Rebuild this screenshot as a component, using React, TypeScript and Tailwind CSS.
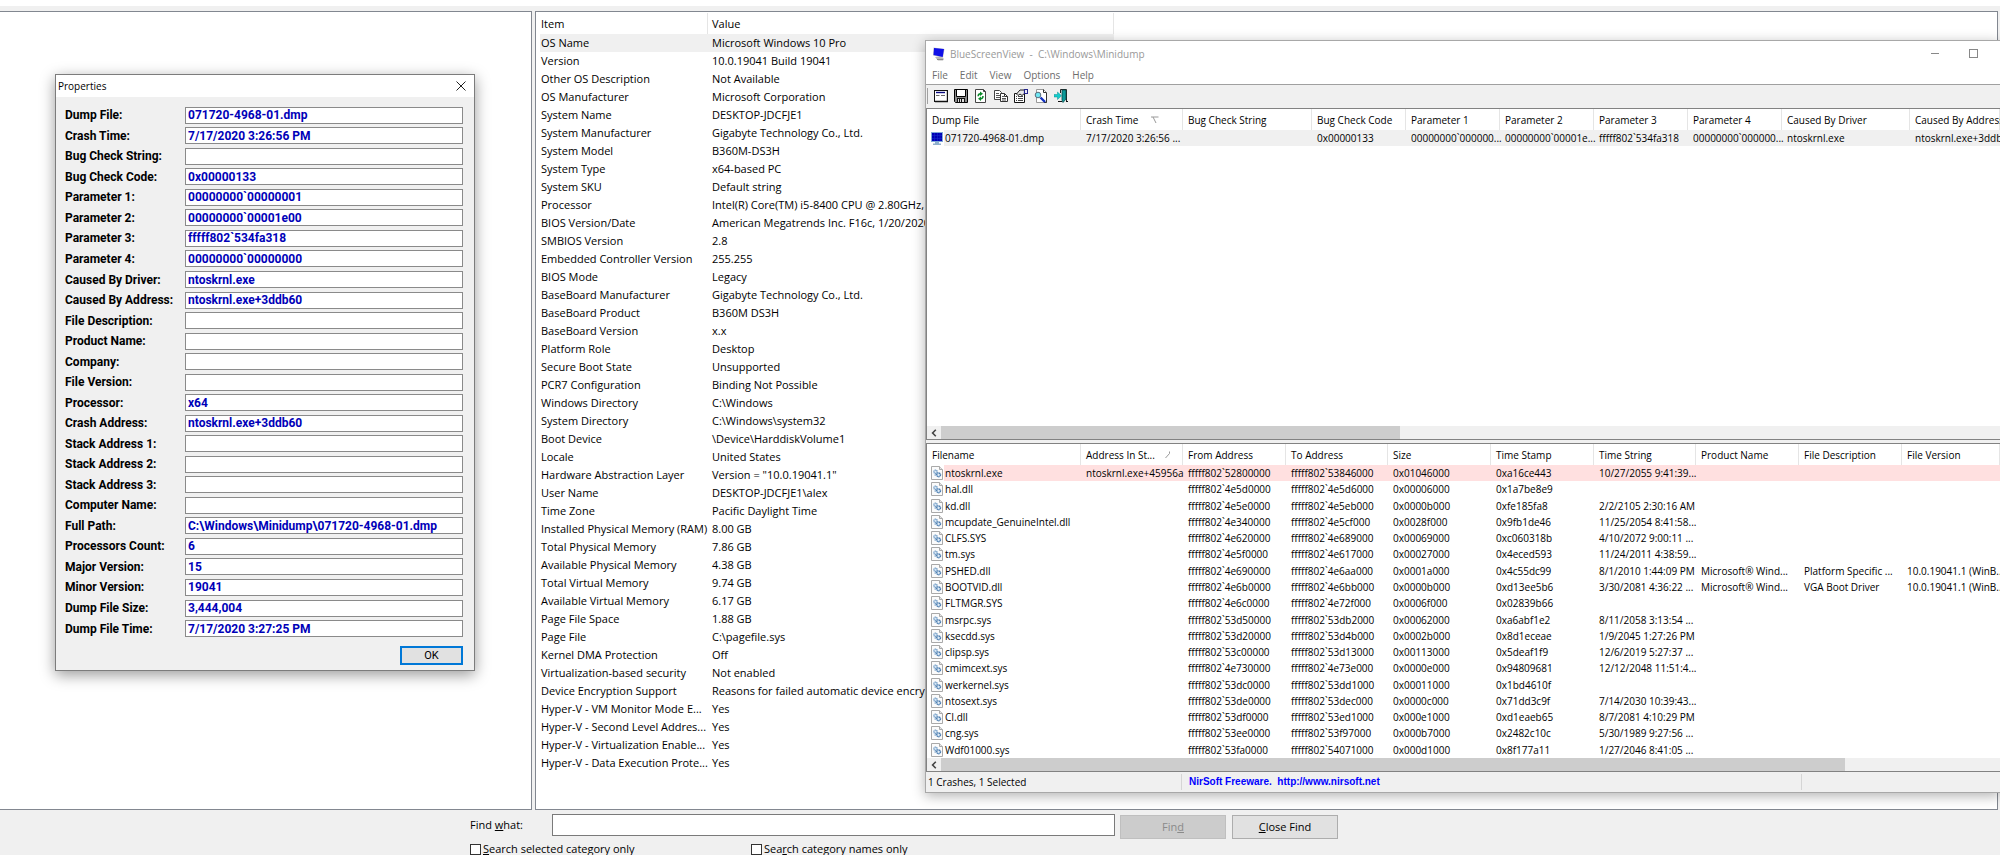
import { ReactNode } from 'react';

const systemInfo = [
    ['OS Name', 'Microsoft Windows 10 Pro'],
    ['Version', '10.0.19041 Build 19041'],
    ['Other OS Description', 'Not Available'],
    ['OS Manufacturer', 'Microsoft Corporation'],
    ['System Name', 'DESKTOP-JDCFJE1'],
    ['System Manufacturer', 'Gigabyte Technology Co., Ltd.'],
    ['System Model', 'B360M-DS3H'],
    ['System Type', 'x64-based PC'],
    ['System SKU', 'Default string'],
    ['Processor', 'Intel(R) Core(TM) i5-8400 CPU @ 2.80GHz,'],
    ['BIOS Version/Date', 'American Megatrends Inc. F16c, 1/20/2020'],
    ['SMBIOS Version', '2.8'],
    ['Embedded Controller Version', '255.255'],
    ['BIOS Mode', 'Legacy'],
    ['BaseBoard Manufacturer', 'Gigabyte Technology Co., Ltd.'],
    ['BaseBoard Product', 'B360M DS3H'],
    ['BaseBoard Version', 'x.x'],
    ['Platform Role', 'Desktop'],
    ['Secure Boot State', 'Unsupported'],
    ['PCR7 Configuration', 'Binding Not Possible'],
    ['Windows Directory', 'C:\\Windows'],
    ['System Directory', 'C:\\Windows\\system32'],
    ['Boot Device', '\\Device\\HarddiskVolume1'],
    ['Locale', 'United States'],
    ['Hardware Abstraction Layer', 'Version = "10.0.19041.1"'],
    ['User Name', 'DESKTOP-JDCFJE1\\alex'],
    ['Time Zone', 'Pacific Daylight Time'],
    ['Installed Physical Memory (RAM)', '8.00 GB'],
    ['Total Physical Memory', '7.86 GB'],
    ['Available Physical Memory', '4.38 GB'],
    ['Total Virtual Memory', '9.74 GB'],
    ['Available Virtual Memory', '6.17 GB'],
    ['Page File Space', '1.88 GB'],
    ['Page File', 'C:\\pagefile.sys'],
    ['Kernel DMA Protection', 'Off'],
    ['Virtualization-based security', 'Not enabled'],
    ['Device Encryption Support', 'Reasons for failed automatic device encryp'],
    ['Hyper-V - VM Monitor Mode E...', 'Yes'],
    ['Hyper-V - Second Level Addres...', 'Yes'],
    ['Hyper-V - Virtualization Enable...', 'Yes'],
    ['Hyper-V - Data Execution Prote...', 'Yes'],
];

const properties = [
    ['Dump File:', '071720-4968-01.dmp'],
    ['Crash Time:', '7/17/2020 3:26:56 PM'],
    ['Bug Check String:', ''],
    ['Bug Check Code:', '0x00000133'],
    ['Parameter 1:', '00000000`00000001'],
    ['Parameter 2:', '00000000`00001e00'],
    ['Parameter 3:', 'fffff802`534fa318'],
    ['Parameter 4:', '00000000`00000000'],
    ['Caused By Driver:', 'ntoskrnl.exe'],
    ['Caused By Address:', 'ntoskrnl.exe+3ddb60'],
    ['File Description:', ''],
    ['Product Name:', ''],
    ['Company:', ''],
    ['File Version:', ''],
    ['Processor:', 'x64'],
    ['Crash Address:', 'ntoskrnl.exe+3ddb60'],
    ['Stack Address 1:', ''],
    ['Stack Address 2:', ''],
    ['Stack Address 3:', ''],
    ['Computer Name:', ''],
    ['Full Path:', 'C:\\Windows\\Minidump\\071720-4968-01.dmp'],
    ['Processors Count:', '6'],
    ['Major Version:', '15'],
    ['Minor Version:', '19041'],
    ['Dump File Size:', '3,444,004'],
    ['Dump File Time:', '7/17/2020 3:27:25 PM'],
];

const crashColumns = ['Dump File', 'Crash Time', 'Bug Check String', 'Bug Check Code', 'Parameter 1', 'Parameter 2', 'Parameter 3', 'Parameter 4', 'Caused By Driver', 'Caused By Address'];

const crashes = [
    ['071720-4968-01.dmp', '7/17/2020 3:26:56 ...', '', '0x00000133', '00000000`000000...', '00000000`00001e...', 'fffff802`534fa318', '00000000`000000...', 'ntoskrnl.exe', 'ntoskrnl.exe+3ddb60'],
];

const driverColumns = ['Filename', 'Address In St...', 'From Address', 'To Address', 'Size', 'Time Stamp', 'Time String', 'Product Name', 'File Description', 'File Version'];

const drivers = [
    ['ntoskrnl.exe', 'ntoskrnl.exe+45956a', 'fffff802`52800000', 'fffff802`53846000', '0x01046000', '0xa16ce443', '10/27/2055 9:41:39...', '', '', ''],
    ['hal.dll', '', 'fffff802`4e5d0000', 'fffff802`4e5d6000', '0x00006000', '0x1a7be8e9', '', '', '', ''],
    ['kd.dll', '', 'fffff802`4e5e0000', 'fffff802`4e5eb000', '0x0000b000', '0xfe185fa8', '2/2/2105 2:30:16 AM', '', '', ''],
    ['mcupdate_GenuineIntel.dll', '', 'fffff802`4e340000', 'fffff802`4e5cf000', '0x0028f000', '0x9fb1de46', '11/25/2054 8:41:58...', '', '', ''],
    ['CLFS.SYS', '', 'fffff802`4e620000', 'fffff802`4e689000', '0x00069000', '0xc060318b', '4/10/2072 9:00:11 ...', '', '', ''],
    ['tm.sys', '', 'fffff802`4e5f0000', 'fffff802`4e617000', '0x00027000', '0x4eced593', '11/24/2011 4:38:59...', '', '', ''],
    ['PSHED.dll', '', 'fffff802`4e690000', 'fffff802`4e6aa000', '0x0001a000', '0x4c55dc99', '8/1/2010 1:44:09 PM', 'Microsoft® Wind...', 'Platform Specific ...', '10.0.19041.1 (WinB...'],
    ['BOOTVID.dll', '', 'fffff802`4e6b0000', 'fffff802`4e6bb000', '0x0000b000', '0xd13ee5b6', '3/30/2081 4:36:22 ...', 'Microsoft® Wind...', 'VGA Boot Driver', '10.0.19041.1 (WinB...'],
    ['FLTMGR.SYS', '', 'fffff802`4e6c0000', 'fffff802`4e72f000', '0x0006f000', '0x02839b66', '', '', '', ''],
    ['msrpc.sys', '', 'fffff802`53d50000', 'fffff802`53db2000', '0x00062000', '0xa6abf1e2', '8/11/2058 3:13:54 ...', '', '', ''],
    ['ksecdd.sys', '', 'fffff802`53d20000', 'fffff802`53d4b000', '0x0002b000', '0x8d1eceae', '1/9/2045 1:27:26 PM', '', '', ''],
    ['clipsp.sys', '', 'fffff802`53c00000', 'fffff802`53d13000', '0x00113000', '0x5deaf1f9', '12/6/2019 5:27:37 ...', '', '', ''],
    ['cmimcext.sys', '', 'fffff802`4e730000', 'fffff802`4e73e000', '0x0000e000', '0x94809681', '12/12/2048 11:51:4...', '', '', ''],
    ['werkernel.sys', '', 'fffff802`53dc0000', 'fffff802`53dd1000', '0x00011000', '0x1bd4610f', '', '', '', ''],
    ['ntosext.sys', '', 'fffff802`53de0000', 'fffff802`53dec000', '0x0000c000', '0x71dd3c9f', '7/14/2030 10:39:43...', '', '', ''],
    ['CI.dll', '', 'fffff802`53df0000', 'fffff802`53ed1000', '0x000e1000', '0xd1eaeb65', '8/7/2081 4:10:29 PM', '', '', ''],
    ['cng.sys', '', 'fffff802`53ee0000', 'fffff802`53f97000', '0x000b7000', '0x2482c10c', '5/30/1989 9:27:56 ...', '', '', ''],
    ['Wdf01000.sys', '', 'fffff802`53fa0000', 'fffff802`54071000', '0x000d1000', '0x8f177a11', '1/27/2046 8:41:05 ...', '', '', ''],
];

const AppIcon = () => (
    <svg width="14" height="14" viewBox="0 0 14 14">
        <path d="M3 10l7 0 2 2-1 1.5H6z" fill="#b8b8b8" />
        <path d="M5 12.5h6" stroke="#8a8a8a" />
        <path d="M1.5 0.5l11 1.5-1.5 9L1 8.5z" fill="#c9c9c9" />
        <path d="M2 1l10 1-1.3 8L1.5 8z" fill="#1010e8" />
    </svg>
);

const DumpIcon = () => (
    <svg width="12" height="13" viewBox="0 0 12 13">
        <rect width="12" height="10" fill="#7fa8d8" />
        <rect x="1" y="1" width="10" height="8" fill="#0000b4" />
        <path d="M1 3.5h10M1 6.5h10M3.5 1v8M6.5 1v8M9 1v8" stroke="#1a32d0" strokeWidth="0.5" />
        <path d="M4 10h4v1.5h2V13H2v-1.5h2z" fill="#8fb0cc" />
    </svg>
);

const DriverIcon = () => (
    <svg width="12" height="14" viewBox="0 0 12 14">
        <path d="M0.5 0.5h8l3 3v10H0.5z" fill="#fbfbfb" stroke="#a9a9a9" />
        <path d="M8.5 0.5v3h3" fill="#e4e4e4" stroke="#a9a9a9" />
        <circle cx="4.5" cy="5.8" r="1.7" fill="#dbe9f5" stroke="#6f9ac4" strokeWidth="1.3" strokeDasharray="1.2 0.4" />
        <circle cx="7.6" cy="8.8" r="1.9" fill="#dbe9f5" stroke="#4a7cb0" strokeWidth="1.4" strokeDasharray="1.3 0.4" />
        <circle cx="4.2" cy="9" r="0.8" fill="#6f9ac4" />
    </svg>
);

const toolbarIcons: { name: string; drawing: ReactNode }[] = [
    {
        name: 'Advanced options',
        drawing: (
            <>
                <rect x="0.5" y="1.5" width="13" height="11" fill="#fff" stroke="#111" />
                <path d="M13.5 2v11M1 12.5h13" stroke="#111" strokeWidth="1.4" />
                <path d="M2 3.5h9" stroke="#0a0a80" strokeWidth="1.4" />
                <path d="M2 6.5h3.5M7 6.5h4" stroke="#666" />
            </>
        ),
    },
    {
        name: 'Save',
        drawing: (
            <>
                <path d="M0.5 0.5h13v13h-12l-1-1z" fill="#8a8a8a" stroke="#000" />
                <rect x="3" y="1" width="8" height="6" fill="#fff" />
                <path d="M2.5 1v6.5h9V1" stroke="#000" fill="none" />
                <rect x="3" y="9" width="8" height="4.5" fill="#111" />
                <path d="M4 10h1v3H4zM6 10h1v3H6zM8 10h2v3H8z" fill="#ddd" />
            </>
        ),
    },
    {
        name: 'Refresh',
        drawing: (
            <>
                <path d="M1.5 0.5h8l2 2v11h-10z" fill="#fff" stroke="#444" />
                <path d="M9.5 0.5v2h2" fill="none" stroke="#444" />
                <path d="M4.2 7.2c0-1.6.8-2.4 2.3-2.4" fill="none" stroke="#0a8a2a" strokeWidth="1.5" />
                <path d="M6 2.6l3 2.2-3 2.2z" fill="#0a8a2a" />
                <path d="M9 7c0 1.8-.8 2.7-2.3 2.7" fill="none" stroke="#0a8a2a" strokeWidth="1.5" />
                <path d="M7 7.5l-3 2.2 3 2.2z" fill="#0a8a2a" />
            </>
        ),
    },
    {
        name: 'Copy',
        drawing: (
            <>
                <path d="M0.5 1.5h5l2 2v7h-7z" fill="#fff" stroke="#444" />
                <path d="M2 4.5h3M2 6.5h4M2 8.5h4" stroke="#555" />
                <path d="M6.5 4.5h4l3 3v5h-7z" fill="#fff" stroke="#333" />
                <path d="M10.5 4.5v3h3" fill="none" stroke="#333" />
                <path d="M8 7.5h2M8 9.5h4M8 11h4" stroke="#555" />
            </>
        ),
    },
    {
        name: 'Properties',
        drawing: (
            <>
                <path d="M0.5 4.5h10v9h-10z" fill="#fff" stroke="#111" />
                <path d="M2 7.5h1M4 7.5h5M2 9.5h1M4 9.5h5M2 11.5h1M4 11.5h5" stroke="#444" />
                <path d="M2.5 5l3.5-4h5v3L8 6.5 6 5 4 6.5z" fill="#e8e8e8" stroke="#222" />
                <path d="M10.5 0.5h3v4h-3z" fill="#fff" stroke="#24248c" strokeWidth="1.2" />
            </>
        ),
    },
    {
        name: 'Find',
        drawing: (
            <>
                <path d="M2.5 0.5h7l3 3v10h-10z" fill="#fff" stroke="#999" />
                <path d="M9.5 0.5v3h3M12.5 4v9.5H10" fill="none" stroke="#333" />
                <circle cx="4" cy="6" r="2.8" fill="#6fe6f2" stroke="#5a6a7a" />
                <path d="M6.5 8.5l4.5 4.5" stroke="#1030c0" strokeWidth="2.4" />
            </>
        ),
    },
    {
        name: 'Exit',
        drawing: (
            <>
                <path d="M6.5 4V0.5h6v12" fill="none" stroke="#222" />
                <path d="M8 1l4 0v9l-3 3.5L8 11z" fill="#0b9a9a" stroke="#074c4c" strokeWidth="0.8" />
                <path d="M0 5.5h3.5V3L7.5 6.8 3.5 10.5V8H0z" fill="#14cccc" stroke="#0a9090" strokeWidth="0.5" />
                <path d="M4 12.5h4M12 12.5h2" stroke="#111" />
            </>
        ),
    },
];

const HScroll = ({ thumb }: { thumb: string }) => (
    <div className="flex h-[13px] items-stretch bg-[#f0f0f0]">
        <button aria-label="Scroll left" className="flex w-[14px] items-center justify-center">
            <svg width="6" height="8" viewBox="0 0 6 8">
                <path d="M4.8 0.8L1.6 4l3.2 3.2" fill="none" stroke="#444" strokeWidth="1.6" />
            </svg>
        </button>
        <div className={'bg-[#cdcdcd] ' + thumb}></div>
    </div>
);

type ReportProps = {
    columns: string[];
    rows: string[][];
    widths: string[];
    rowColor: string;
    icon: ReactNode;
    sortMark: ReactNode;
    className: string;
};

// the first column is split in two so that the highlight starts after the icon
const Report = ({ columns, rows, widths, rowColor, icon, sortMark, className }: ReportProps) => (
    <table className={'w-full table-fixed border-separate border-spacing-0 whitespace-nowrap text-left ' + className}>
        <colgroup>
            <col className="w-[17px]" />
            <col className="w-[137px]" />
            {widths.map((width, i) => <col key={i} className={width} />)}
            <col />
        </colgroup>
        <thead>
            <tr className="h-[21px]">
                {columns.map((column, i) => (
                    <th key={column} colSpan={i === 0 ? 2 : 1} className="border-r border-[#e5e5e5] p-0 pl-[5px] font-normal">
                        {i === 1 ? (
                            <div className="flex items-center justify-between pr-3">
                                {column}
                                {sortMark}
                            </div>
                        ) : column}
                    </th>
                ))}
            </tr>
        </thead>
        <tbody>
            {rows.map((row, r) => (
                <tr key={row[0]} className={r === 0 ? rowColor : ''}>
                    <td className="bg-white p-0 pl-1">{icon}</td>
                    {row.map((cell, i) => (
                        <td key={i} className={i === 0 ? 'p-0 pl-px' : 'p-0 pl-[5px]'}>{cell}</td>
                    ))}
                </tr>
            ))}
        </tbody>
    </table>
);

const BlueScreenView = () => (
    <section className="absolute top-10 right-0 left-[925px] flex flex-col border-y border-l border-[#a8a8a8] bg-white font-['Open_Sans',sans-serif] text-[10px] leading-4 text-black shadow-[0_3px_12px_rgba(0,0,0,0.3)]">
        <header className="flex h-[25px] items-center pl-[6px] text-[#999]">
            <AppIcon />
            <h1 className="flex-1 pl-1 whitespace-pre">BlueScreenView  -  C:\Windows\Minidump</h1>
            <button aria-label="Minimize" className="flex h-full w-[38px] items-center justify-center">
                <span className="h-px w-2 bg-[#888]"></span>
            </button>
            <button aria-label="Maximize" className="mr-2 flex h-full w-[38px] items-center justify-center">
                <span className="size-[9px] border border-[#888]"></span>
            </button>
        </header>
        <nav className="flex h-[18px] items-center gap-3 pl-[6px] text-[#6d6d6d]">
            {['File', 'Edit', 'View', 'Options', 'Help'].map((menu) => <button key={menu}>{menu}</button>)}
        </nav>
        <div className="flex h-6 items-center gap-[6px] border-t border-[#a0a0a0] bg-[#f0f0f0] pb-[2px] pl-px">
            <span className="h-4 w-px bg-[#a0a0a0]"></span>
            {toolbarIcons.map((icon) => (
                <button key={icon.name} aria-label={icon.name}>
                    <svg width="14" height="14" viewBox="0 0 14 14">{icon.drawing}</svg>
                </button>
            ))}
        </div>
        <div className="flex h-[332px] flex-col border-y border-l border-[#828282]">
            <Report
                columns={crashColumns}
                rows={crashes}
                widths={['w-[102px]', 'w-[129px]', 'w-[94px]', 'w-[94px]', 'w-[94px]', 'w-[94px]', 'w-[94px]', 'w-[128px]']}
                rowColor="h-4 bg-[#f0f0f0]"
                icon={<DumpIcon />}
                sortMark={<svg width="20" height="8" viewBox="0 0 20 8"><path d="M8.5 1H1M3 1l3 6" fill="none" stroke="#999" /></svg>}
                className="mb-auto"
            />
            <HScroll thumb="w-[459px]" />
        </div>
        <div className="h-[3px] bg-[#f0f0f0]"></div>
        <div className="flex h-[329px] flex-col border-y border-l border-[#828282]">
            <Report
                columns={driverColumns}
                rows={drivers}
                widths={['w-[102px]', 'w-[103px]', 'w-[102px]', 'w-[103px]', 'w-[103px]', 'w-[102px]', 'w-[103px]', 'w-[103px]']}
                rowColor="bg-[#ffe0e0]"
                icon={<DriverIcon />}
                sortMark={<svg width="6" height="8" viewBox="0 0 6 8"><path d="M5.5 0.5v2L1.5 7" fill="none" stroke="#999" /></svg>}
                className="h-[314px]"
            />
            <HScroll thumb="w-[904px]" />
        </div>
        <footer className="flex h-5 items-center bg-[#f0f0f0]">
            <span className="w-[256px] border-r border-[#d5d5d5] pl-[2px]">1 Crashes, 1 Selected</span>
            <a href="http://www.nirsoft.net" className="w-[620px] border-r border-[#d5d5d5] pl-[7px] font-['Liberation_Sans',sans-serif] font-bold whitespace-pre text-[#0000ff]">NirSoft Freeware.  http://www.nirsoft.net</a>
        </footer>
    </section>
);

const PropertiesDialog = () => (
    <section className="absolute top-[74px] left-[55px] flex h-[597px] w-[420px] flex-col border border-[#7c7c7c] bg-[#f0f0f0] font-['Roboto',sans-serif] text-[12px] shadow-[0_4px_14px_rgba(0,0,0,0.4)]">
        <header className="flex h-[22px] items-center justify-between bg-white pr-2 pl-[2px] font-['Open_Sans',sans-serif] text-[10px]">
            <h2>Properties</h2>
            <button aria-label="Close">
                <svg width="10" height="10" viewBox="0 0 10 10"><path d="M0.5 0.5l9 9M9.5 0.5l-9 9" stroke="#222" fill="none" /></svg>
            </button>
        </header>
        <div className="flex flex-1 flex-col pt-2 pr-[11px] pb-[5px] pl-[9px]">
            <div className="flex flex-1 flex-col font-bold">
                {properties.map(([label, value]) => (
                    <label key={label} className="flex flex-1 items-center">
                        <span className="w-[120px]">{label}</span>
                        <input readOnly value={value} className="h-[17px] min-w-0 flex-1 border border-[#8a8a8a] bg-white pl-[2px] text-[#0000b8]" />
                    </label>
                ))}
            </div>
            <button className="mt-[7px] h-[19px] w-[63px] self-end border-2 border-[#0078d7] bg-[#e1e1e1] text-[11px] leading-none">OK</button>
        </div>
    </section>
);

const SystemInformation = () => (
    <main className="flex flex-1 gap-[3px] border-t-[5px] border-[#f0f0f0] bg-[#f0f0f0] pr-[2px]">
        <div className="-ml-px w-[533px] border border-[#828790] bg-white"></div>
        <div className="flex-1 border border-[#828790] bg-white pt-px pl-1">
            <table className="w-[574px] table-fixed border-separate border-spacing-0 text-left whitespace-nowrap">
                <colgroup>
                    <col className="w-[168px]" />
                    <col />
                </colgroup>
                <thead>
                    <tr className="h-[21px]">
                        <th className="border-r border-[#e5e5e5] p-0 pl-px font-normal">Item</th>
                        <th className="border-r border-[#e5e5e5] p-0 pl-1 font-normal">Value</th>
                    </tr>
                </thead>
                <tbody>
                    {systemInfo.map(([item, value], i) => (
                        <tr key={item} className={i === 0 ? 'h-[18px] bg-[#f0f0f0]' : 'h-[18px]'}>
                            <td className="p-0 pl-px">{item}</td>
                            <td className="p-0 pl-1">{value}</td>
                        </tr>
                    ))}
                </tbody>
            </table>
        </div>
    </main>
);

const checks = [
    { key: 'S', before: '', after: 'earch selected category only' },
    { key: 'r', before: 'Sea', after: 'ch category names only' },
];

const FindBar = () => (
    <form className="flex h-[45px] flex-col gap-1 bg-[#f0f0f0] pt-1 pl-[470px]">
        <div className="flex items-start">
            <label htmlFor="find" className="w-[82px] leading-[22px]">Find <u>w</u>hat:</label>
            <input id="find" className="h-[22px] w-[563px] border border-[#7a7a7a] bg-white px-1" />
            <button type="button" disabled className="mt-px ml-[5px] h-6 w-[106px] border border-[#bfbfbf] bg-[#ccc] text-[#8a8a8a]">Fin<u>d</u></button>
            <button type="button" className="mt-px ml-[6px] h-6 w-[106px] border border-[#adadad] bg-[#e1e1e1]"><u>C</u>lose Find</button>
        </div>
        <div className="flex">
            {checks.map((check) => (
                <label key={check.key} className="flex h-3 w-[281px] items-center gap-[2px]">
                    <input type="checkbox" className="size-[11px] appearance-none border border-[#333] bg-white" />
                    <span>{check.before}<u>{check.key}</u>{check.after}</span>
                </label>
            ))}
        </div>
    </form>
);

const App = () => {
    return (
        <div className="relative flex h-screen flex-col overflow-hidden bg-white pt-[6px] font-['Open_Sans',sans-serif] text-[11px] leading-4 text-black">
            <SystemInformation />
            <FindBar />
            <PropertiesDialog />
            <BlueScreenView />
        </div>
    );
}

export default App
